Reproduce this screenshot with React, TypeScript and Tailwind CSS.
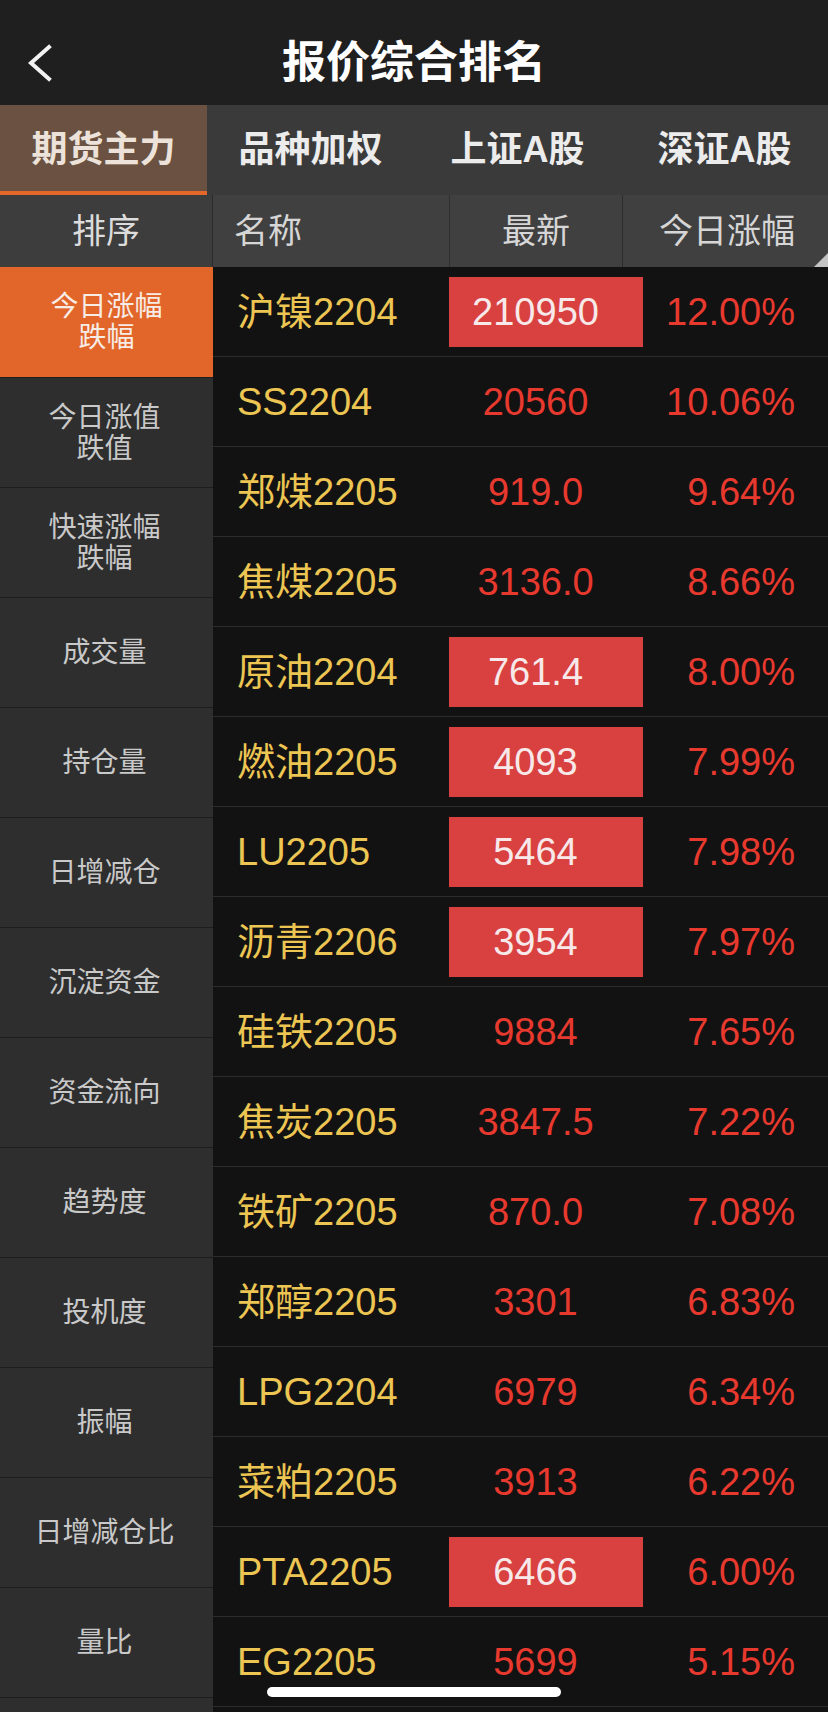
const rows = [
  { name: '沪镍2204', price: '210950', pct: '12.00%', box: true },
  { name: 'SS2204', price: '20560', pct: '10.06%' },
  { name: '郑煤2205', price: '919.0', pct: '9.64%' },
  { name: '焦煤2205', price: '3136.0', pct: '8.66%' },
  { name: '原油2204', price: '761.4', pct: '8.00%', box: true },
  { name: '燃油2205', price: '4093', pct: '7.99%', box: true },
  { name: 'LU2205', price: '5464', pct: '7.98%', box: true },
  { name: '沥青2206', price: '3954', pct: '7.97%', box: true },
  { name: '硅铁2205', price: '9884', pct: '7.65%' },
  { name: '焦炭2205', price: '3847.5', pct: '7.22%' },
  { name: '铁矿2205', price: '870.0', pct: '7.08%' },
  { name: '郑醇2205', price: '3301', pct: '6.83%' },
  { name: 'LPG2204', price: '6979', pct: '6.34%' },
  { name: '菜粕2205', price: '3913', pct: '6.22%' },
  { name: 'PTA2205', price: '6466', pct: '6.00%', box: true },
  { name: 'EG2205', price: '5699', pct: '5.15%' },
]

const sorts = [
  ['今日涨幅', '跌幅'],
  ['今日涨值', '跌值'],
  ['快速涨幅', '跌幅'],
  ['成交量'],
  ['持仓量'],
  ['日增减仓'],
  ['沉淀资金'],
  ['资金流向'],
  ['趋势度'],
  ['投机度'],
  ['振幅'],
  ['日增减仓比'],
  ['量比'],
  [''],
]

const tabs = ['期货主力', '品种加权', '上证A股', '深证A股']

export default function App() {
  return (
    <div className="relative h-[1712px] w-[828px] overflow-hidden bg-[#121212] font-['Liberation_Sans','Noto_Sans_CJK_SC',sans-serif]">
      {/* title bar */}
      <div className="grid h-[105px] grid-cols-[1fr_auto_1fr] items-center bg-[#1f1f1f] pt-[20px]">
        <div className="pl-[27px]">
          <svg width="26" height="40" viewBox="0 0 26 40" fill="none">
            <polyline points="22,4 4,20 22,36" stroke="#f2f2f2" strokeWidth="4" strokeLinecap="square" />
          </svg>
        </div>
        <h1 className="text-[44px] font-bold leading-none text-white">报价综合排名</h1>
        <div />
      </div>

      {/* tabs */}
      <div className="grid h-[90px] grid-cols-4 bg-[#3a3a3a]">
        {tabs.map((t, i) => (
          <div
            key={t}
            className={
              i === 0
                ? 'flex items-center justify-center border-b-4 border-[#e4682a] bg-[#6a5141] pt-1 text-[36px] font-bold text-[#ece2da]'
                : 'flex items-center justify-center text-[36px] font-bold text-[#ececec]'
            }
          >
            {t}
          </div>
        ))}
      </div>

      <div className="flex">
        {/* sort column */}
        <div className="w-[213px] shrink-0 bg-[#1c1c1c]">
          <div className="flex h-[72px] items-center justify-center border-r border-[#2a2a2a] bg-[#3d3d3d] text-[34px] text-[#dcdcdc]">
            排序
          </div>
          {sorts.map((s, i) => (
            <div
              key={i}
              className={
                i === 0
                  ? 'flex h-[110px] flex-col items-center justify-center bg-[#e2652a] text-[28px] leading-[31px] text-[#f7ece5]'
                  : 'flex h-[110px] flex-col items-center justify-center border-t border-[#1d1d1d] bg-[#2e2e2e] pr-[4px] text-[28px] leading-[31px] text-[#c9c9c9]'
              }
            >
              {s.map((l) => (
                <span key={l}>{l}</span>
              ))}
            </div>
          ))}
        </div>

        {/* table */}
        <div className="flex-1">
          <div className="relative grid h-[72px] grid-cols-[236px_173px_1fr] bg-[#404040] text-[34px] text-[#d6d6d6]">
            <div className="flex items-center pl-[21px]">名称</div>
            <div className="flex items-center justify-center border-l border-[#303030]">最新</div>
            <div className="flex items-center justify-end border-l border-[#2c2c2c] pr-[33px]">今日涨幅</div>
            <div className="absolute bottom-0 right-0 h-0 w-0 border-b-[14px] border-l-[14px] border-b-[#c4c4c4] border-l-transparent" />
          </div>
          {rows.map((r) => (
            <div
              key={r.name}
              className="grid h-[90px] grid-cols-[236px_173px_1fr] items-center border-b border-[#2c2c2c] text-[38px] leading-none"
            >
              <div className="pl-[24px] text-[#ecc552]">{r.name}</div>
              <div className="overflow-visible">
                {r.box ? (
                  <div className="flex h-[70px] w-[194px] items-center bg-[#d94140]">
                    <span className="w-[173px] text-center text-[#f7e9e9]">{r.price}</span>
                  </div>
                ) : (
                  <div className="text-center text-[#e8392f]">{r.price}</div>
                )}
              </div>
              <div className="pr-[33px] text-right text-[#e8392f]">{r.pct}</div>
            </div>
          ))}
        </div>
      </div>

      {/* home indicator */}
      <div className="absolute left-[267px] top-[1687px] h-[10px] w-[294px] rounded-full bg-white" />
    </div>
  )
}
